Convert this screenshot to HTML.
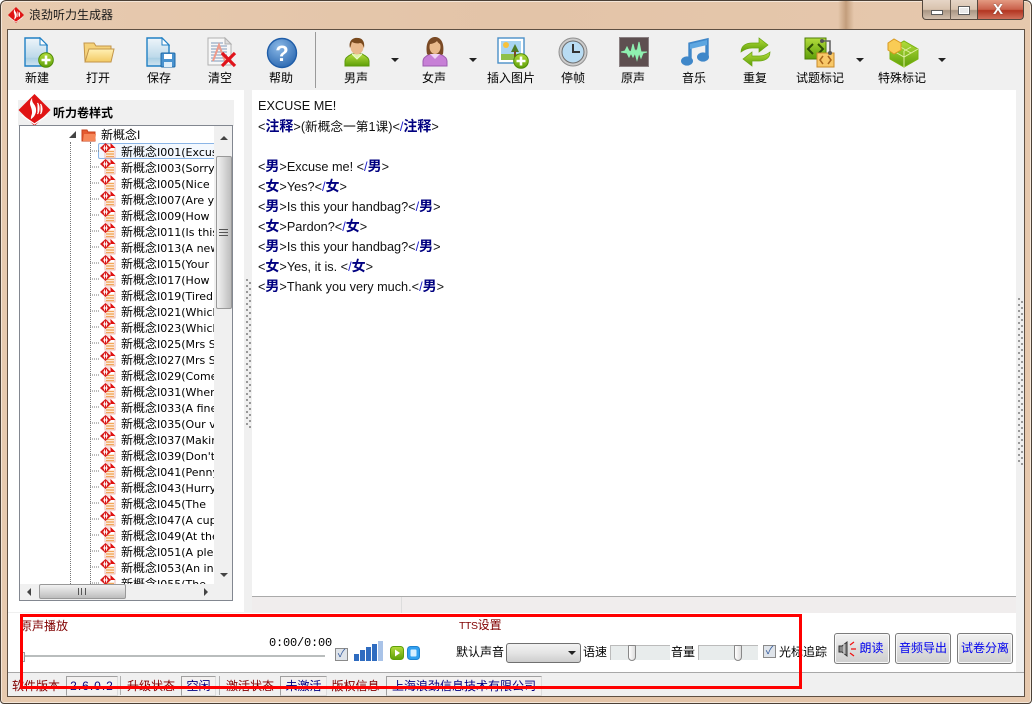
<!DOCTYPE html>
<html><head><meta charset="utf-8">
<style>
html,body{margin:0;padding:0;width:1032px;height:704px;overflow:hidden;background:#fff}
*{box-sizing:border-box}
body{font-family:"Liberation Sans","WenQuanYi Zen Hei","Noto Sans CJK SC",sans-serif;font-size:12px;color:#000;position:relative}
.a{position:absolute}
.t{position:absolute;white-space:nowrap;line-height:16px}
.c{transform:translateX(-50%)}
.i{position:absolute}
.dd{position:absolute;width:0;height:0;border-left:4px solid transparent;border-right:4px solid transparent;border-top:4px solid #222}
.row{position:absolute;left:0;height:16px;line-height:16px;white-space:nowrap;padding-left:101px;font-family:"DejaVu Sans","WenQuanYi Zen Hei",sans-serif;font-size:11px}
.row u{text-decoration:none;font-size:12px;font-family:"Liberation Sans","WenQuanYi Zen Hei","Noto Sans CJK SC",sans-serif}
.ed{position:absolute;left:258px;height:20px;line-height:20px;white-space:nowrap;font-size:12.7px;color:#111}
.ed b{color:#000080;font-size:14px}
.ed i{font-style:normal;color:#22c}
.sb{position:absolute;top:676px;height:20px;line-height:20px;white-space:nowrap;color:#800000;font-size:12px;text-align:center}
.sv{position:absolute;top:676px;height:20px;line-height:18px;white-space:nowrap;color:#000080;font-size:12px;text-align:center;border:1px solid #a0a0a0;border-right-color:#ddd;border-bottom-color:#ddd;background:#f3f1f0}
.btn{position:absolute;top:633px;height:31px;border:1px solid #7c7c7c;border-radius:3px;background:linear-gradient(#f2f2f2,#dedede 50%,#cfcfcf);box-shadow:inset 0 0 0 1px #f8f8f8;color:#0000ee;text-align:center;line-height:29px;white-space:nowrap;font-size:12px}
.dw{position:absolute;width:2px;background:repeating-linear-gradient(#999 0,#999 2px,transparent 2px,transparent 6px)}
</style></head><body>
<svg width="0" height="0" style="position:absolute">
<defs>
<linearGradient id="pg" x1="0" y1="0" x2="0" y2="1"><stop offset="0" stop-color="#eef5fa"/><stop offset=".7" stop-color="#bcd9ea"/><stop offset=".71" stop-color="#a9cfe3"/><stop offset="1" stop-color="#cfe3ef"/></linearGradient>
<linearGradient id="fg" x1="0" y1="0" x2="0" y2="1"><stop offset="0" stop-color="#fff0b5"/><stop offset="1" stop-color="#f3c963"/></linearGradient>
<radialGradient id="bg" cx=".4" cy=".3" r=".8"><stop offset="0" stop-color="#8ab8e6"/><stop offset="1" stop-color="#2563ad"/></radialGradient>
<linearGradient id="gn" x1="0" y1="0" x2="0" y2="1"><stop offset="0" stop-color="#b3dc3c"/><stop offset="1" stop-color="#5e9f08"/></linearGradient>
<symbol id="plus" viewBox="0 0 16 16"><circle cx="8" cy="8" r="7.3" fill="url(#gn)" stroke="#4d8a05"/><path d="M8 3.5v9M3.5 8h9" stroke="#fff" stroke-width="2.6"/></symbol>
<symbol id="page" viewBox="0 0 24 30"><path d="M1 1h15l7 7v21H1z" fill="url(#pg)" stroke="#2180c4" stroke-width="1.4"/><path d="M16 1v7h7z" fill="#fff" stroke="#2180c4"/></symbol>
<symbol id="doc" viewBox="0 0 16 16"><path d="M5 1h6l4 4v10H5z" fill="#fff" stroke="#eaa9a0" stroke-width=".8"/><path d="M10.500 0l5 5h-5z" fill="#e01010"/><path d="M6 8.500h8M6 11h8M6 13.500h8" stroke="#f2a65a" stroke-width="1.400"/><path d="M5.500 0L11 5 5.500 10 0 5z" fill="#d81c1c"/><path d="M4.500 2.500v5M6.500 2.500v5M3 5h5" stroke="#fff" stroke-width=".9"/></symbol>
<symbol id="logo" viewBox="0 0 32 32"><path d="M16 0L32 16 16 32 0 16z" fill="#e01414"/><path d="M3 21l13 9 13-9" fill="none" stroke="#fff" stroke-width="1.3"/><path d="M13 6c-3 5 2 7 1 14-1 3-1 4-1 4 4-3 5-8 3-12-1-2-3-3-3-6zM19 9c2 3 2 8 0 11M22 10c2 3 2 7 0 10" fill="#fff" stroke="#fff" stroke-width="1.2"/></symbol>
<symbol id="man" viewBox="0 0 26 30"><path d="M1 29v-5c0-4 5-6 7-7h10c2 1 7 3 7 7v5z" fill="url(#gn)" stroke="#5b9a0a"/><path d="M8 17l5 5 5-5" fill="#dff3a8" stroke="#eef8cf"/><ellipse cx="13" cy="10" rx="6.500" ry="7.500" fill="#e9b98c"/><path d="M6 11C4 3 10 0 14 1c5 0 7 5 6 10-1-3-2-5-4-5-3 1-6 0-8-1-1 2-1 4-2 6z" fill="#7a4a1e"/></symbol>
<symbol id="woman" viewBox="0 0 26 30"><path d="M1 29v-5c0-4 5-6 7-7h10c2 1 7 3 7 7v5z" fill="#c77fd6" stroke="#9d5bb0"/><path d="M8 17l5 5 5-5" fill="#efd3f5"/><path d="M5 17C3 5 8 0 13 0s10 5 8 17c-1 1-2 1-3 0H8c-1 1-2 1-3 0z" fill="#7a4a25"/><ellipse cx="13" cy="10" rx="5.500" ry="7" fill="#e9b98c"/><path d="M7 7c3 0 6-1 8-3 1 2 3 3 4 4l-1-5H9z" fill="#7a4a25"/></symbol>
</defs></svg>

<!-- window frame -->
<div class="a" style="left:0;top:0;width:1032px;height:704px;background:linear-gradient(90deg,#e7caaf,#e3c4a8 50%,#e6c8ad);border:1px solid #4b4036;border-radius:6px 6px 4px 4px;box-shadow:inset 0 0 0 1px #f4e6d8"></div>
<div class="a" style="left:838px;top:1px;width:16px;height:28px;background:linear-gradient(90deg,transparent,#c39e7c,transparent)"></div>
<div class="a" style="left:7px;top:29px;width:1018px;height:668px;background:#f0f0f0;border:1px solid #5f5043"></div>

<!-- title -->
<svg class="i" style="left:8px;top:7px" width="16" height="16"><use href="#logo" width="16" height="16"/></svg>
<div class="t" style="left:29px;top:7px;font-size:12px;color:#1a1a1a">浪劲听力生成器</div>
<!-- window controls -->
<div class="a" style="left:922px;top:0;width:56px;height:20px;border:1px solid #54483e;border-top:0;border-radius:0 0 0 4px;background:linear-gradient(#e6d5c6,#d8c2ad 50%,#a99684 55%,#d2bfad)"></div>
<div class="a" style="left:950px;top:0;width:1px;height:20px;background:#6c5e52"></div>
<div class="a" style="left:978px;top:0;width:46px;height:20px;border:1px solid #54483e;border-top:0;border-left:0;border-radius:0 0 4px 0;background:linear-gradient(#e39a82,#c9604a 50%,#b23420 55%,#d0705a)"></div>
<div class="a" style="left:931px;top:10px;width:12px;height:5px;background:#fff;border:1px solid #5c5c5c"></div>
<div class="a" style="left:958px;top:6px;width:12px;height:9px;background:#e9e9e9;border:1px solid #5c5c5c;box-shadow:inset 0 0 0 1px #fff"></div>
<div class="t" style="left:993px;top:2px;color:#fff;font-weight:bold;font-size:15px;text-shadow:0 0 1px #444">X</div>

<!-- workspace whites -->
<div class="a" style="left:8px;top:90px;width:236px;height:522px;background:#fff"></div>
<div class="a" style="left:252px;top:90px;width:764px;height:506px;background:#fff"></div>
<div class="a" style="left:252px;top:596px;width:764px;height:17px;background:#f0eded;border-top:1px solid #aaa"></div>
<div class="a" style="left:401px;top:597px;width:1px;height:16px;background:#ddd"></div>
<div class="a" style="left:8px;top:613px;width:1008px;height:59px;background:#fff"></div>
<div class="a" style="left:1016px;top:90px;width:8px;height:582px;background:#f0f0f0"></div>
<div class="a" style="left:8px;top:672px;width:1016px;height:1px;background:#a8a8a8"></div>
<div class="a" style="left:8px;top:673px;width:1016px;height:23px;background:#f0f0f0"></div>
<div class="dw" style="left:246px;top:279px;height:150px"></div>
<div class="dw" style="left:249px;top:282px;height:147px"></div>
<div class="dw" style="left:1018px;top:298px;height:168px"></div>
<div class="dw" style="left:1021px;top:301px;height:165px"></div>

<!-- toolbar -->
<div class="a" style="left:315px;top:32px;width:1px;height:56px;background:#9a9a9a"></div>
<svg class="i" style="left:24px;top:37px" width="30" height="31"><use href="#page" width="24" height="30"/><use href="#plus" x="14" y="15" width="16" height="16"/></svg>
<svg class="i" style="left:83px;top:40px" width="32" height="24"><path d="M2 21L1 3h10l2 3h15v15z" fill="#f5d27a" stroke="#c2954a"/><path d="M2 22L6 9h25l-3 13z" fill="url(#fg)" stroke="#c2954a"/></svg>
<svg class="i" style="left:146px;top:37px" width="30" height="31"><use href="#page" width="24" height="30"/><rect x="15" y="16" width="14" height="14" rx="1" fill="#4a93cf" stroke="#1f6aa8"/><rect x="18" y="17" width="8" height="5" fill="#fff"/><rect x="18" y="25" width="8" height="5" fill="#dfeef9"/></svg>
<svg class="i" style="left:207px;top:37px" width="30" height="31"><path d="M1 1h17l6 6v21H1z" fill="#f7f7f7" stroke="#b0b0b0"/><path d="M18 1v6h6z" fill="#ddd" stroke="#b0b0b0"/><path d="M4 6h12M4 9h16M4 12h16M4 15h16M4 18h16M4 21h16M4 24h16" stroke="#7f99b8"/><path d="M6 24l6-16 6 16" fill="none" stroke="#f09a8a" stroke-width="2"/><path d="M15 16l13 13M28 16L15 29" stroke="#e0141c" stroke-width="3.2"/></svg>
<svg class="i" style="left:266px;top:37px" width="32" height="32"><circle cx="16" cy="16" r="14.500" fill="url(#bg)" stroke="#1f5da8" stroke-width="1.4"/><text x="16" y="24" text-anchor="middle" font-family="Liberation Sans" font-weight="bold" font-size="22" fill="#fff">?</text></svg>
<svg class="i" style="left:344px;top:37px" width="26" height="30"><use href="#man" width="26" height="30"/></svg>
<svg class="i" style="left:422px;top:37px" width="26" height="30"><use href="#woman" width="26" height="30"/></svg>
<svg class="i" style="left:497px;top:37px" width="32" height="32"><rect x="1" y="1" width="26" height="25" fill="#fff" stroke="#4a90c8" stroke-width="1.400"/><rect x="4" y="4" width="20" height="13" fill="#a8d4f2"/><rect x="4" y="17" width="20" height="6" fill="#8fc04a"/><circle cx="9" cy="8" r="3" fill="#f7c23a"/><path d="M18 7l-4 8h8z" fill="#4d7a24"/><rect x="17" y="14" width="2" height="6" fill="#7a4a25"/><use href="#plus" x="16" y="16" width="16" height="16"/></svg>
<svg class="i" style="left:558px;top:37px" width="30" height="30"><circle cx="15" cy="15" r="14" fill="#ccc" stroke="#909090"/><circle cx="15" cy="15" r="11" fill="#b9dcf3" stroke="#6d6d6d"/><path d="M15 7v8h7" fill="none" stroke="#333" stroke-width="2"/></svg>
<svg class="i" style="left:619px;top:37px" width="30" height="30"><rect x=".5" y=".5" width="29" height="29" fill="#5e4f50" stroke="#8a8082"/><path d="M2 15l4-1 2-4 2 4 2 1 2-8 2 8 1-2 1 2 2-10 2 10 2 0 4 0 -4 1-2 5-2-5-2 7-2-7-2 4-2-4-2 4-2-4z" fill="#8ff0b0" stroke="#8ff0b0"/></svg>
<svg class="i" style="left:681px;top:37px" width="28" height="30"><path d="M9 24V7l17-4v17" fill="none" stroke="#3f87c9" stroke-width="3.400"/><path d="M9 7l17-4v5L9 12z" fill="#5da6e0"/><ellipse cx="6" cy="24" rx="6" ry="4.600" fill="#3f87c9"/><ellipse cx="22" cy="20" rx="6" ry="4.600" fill="#3f87c9"/></svg>
<svg class="i" style="left:740px;top:37px" width="31" height="30"><path d="M1 15C1 8 7 6 12 6h7V1l9 7-9 7v-4h-7c-4 0-7 1-11 4z" fill="url(#gn)" stroke="#6aa510" stroke-width=".7"/><path d="M30 15c0 7-6 9-11 9h-7v5l-9-7 9-7v4h7c4 0 7-1 11-4z" fill="url(#gn)" stroke="#6aa510" stroke-width=".7"/></svg>
<svg class="i" style="left:804px;top:37px" width="32" height="31"><rect x="1" y="1" width="21" height="21" fill="url(#gn)" stroke="#4e7d08"/><path d="M9 7l-5 5 5 5M14 7l5 5-5 5" fill="none" stroke="#2e4e05" stroke-width="2"/><path d="M18 4h8v12" fill="none" stroke="#666" stroke-width="1.600"/><rect x="13" y="16" width="17" height="14" fill="#f8c868" stroke="#c98a2a"/><path d="M19 19l-3 4 3 4M24 19l3 4-3 4" fill="none" stroke="#a8641a" stroke-width="1.500"/><circle cx="18" cy="4" r="2" fill="#555"/><circle cx="26" cy="16" r="2" fill="#555"/></svg>
<svg class="i" style="left:887px;top:37px" width="32" height="31"><path d="M3 12l14-8 14 8v10L17 30 3 22z" fill="url(#gn)" stroke="#79b30f"/><path d="M17 14v16M3 12l14 8 14-8M10 8l14 8M17 14l7-4" fill="none" stroke="#dff0a0"/><path d="M1 6l6-4 7 4v7l-7 4-6-4z" fill="#f9cc55" stroke="#d89a20"/></svg>
<div class="t c" style="left:37px;top:70px">新建</div>
<div class="t c" style="left:98px;top:70px">打开</div>
<div class="t c" style="left:159px;top:70px">保存</div>
<div class="t c" style="left:220px;top:70px">清空</div>
<div class="t c" style="left:281px;top:70px">帮助</div>
<div class="t c" style="left:356px;top:70px">男声</div>
<div class="t c" style="left:434px;top:70px">女声</div>
<div class="t c" style="left:511px;top:70px">插入图片</div>
<div class="t c" style="left:573px;top:70px">停帧</div>
<div class="t c" style="left:633px;top:70px">原声</div>
<div class="t c" style="left:694px;top:70px">音乐</div>
<div class="t c" style="left:755px;top:70px">重复</div>
<div class="t c" style="left:820px;top:70px">试题标记</div>
<div class="t c" style="left:902px;top:70px">特殊标记</div>
<div class="dd" style="left:391px;top:58px"></div>
<div class="dd" style="left:469px;top:58px"></div>
<div class="dd" style="left:856px;top:58px"></div>
<div class="dd" style="left:938px;top:58px"></div>

<!-- left panel -->
<div class="a" style="left:18px;top:100px;width:216px;height:26px;background:#f0f0f0"></div>
<svg class="i" style="left:18px;top:94px" width="33" height="32"><use href="#logo" width="33" height="32"/></svg>
<div class="t" style="left:53px;top:105px;font-weight:bold;font-size:12px">听力卷样式</div>
<div class="a" style="left:19px;top:125px;width:214px;height:476px;border:1px solid #828790;background:#fff"></div>
<div class="a" id="tree" style="left:20px;top:126px;width:194px;height:458px;overflow:hidden;background:#fff">
<div class="a" style="left:50px;top:16px;width:1px;height:442px;border-left:1px dotted #777"></div>
<div class="a" style="left:70px;top:16px;width:1px;height:442px;border-left:1px dotted #777"></div>
<div class="a" style="left:49px;top:5px;width:0;height:0;border-left:7px solid transparent;border-bottom:7px solid #444"></div>
<svg class="i" style="left:61px;top:2px" width="16" height="14"><path d="M1 13V2h5l1 2h7v9z" fill="#e45a30" stroke="#c6421c"/><path d="M2 13l1-7h12l-1 7z" fill="#f58658"/></svg>
<div class="t" style="left:81px;top:1px">新概念I</div>
<div class="a" style="left:78px;top:17px;width:136px;height:16px;border:1px solid #8bb5e6;border-radius:2px;background:#f3f8fe"></div>
<div class="row" style="top:18px"><u>新概念</u>I001(Excuse</div>
<div class="row" style="top:34px"><u>新概念</u>I003(Sorry</div>
<div class="row" style="top:50px"><u>新概念</u>I005(Nice</div>
<div class="row" style="top:66px"><u>新概念</u>I007(Are you</div>
<div class="row" style="top:82px"><u>新概念</u>I009(How</div>
<div class="row" style="top:98px"><u>新概念</u>I011(Is this</div>
<div class="row" style="top:114px"><u>新概念</u>I013(A new</div>
<div class="row" style="top:130px"><u>新概念</u>I015(Your</div>
<div class="row" style="top:146px"><u>新概念</u>I017(How</div>
<div class="row" style="top:162px"><u>新概念</u>I019(Tired</div>
<div class="row" style="top:178px"><u>新概念</u>I021(Which</div>
<div class="row" style="top:194px"><u>新概念</u>I023(Which</div>
<div class="row" style="top:210px"><u>新概念</u>I025(Mrs S</div>
<div class="row" style="top:226px"><u>新概念</u>I027(Mrs S</div>
<div class="row" style="top:242px"><u>新概念</u>I029(Come</div>
<div class="row" style="top:258px"><u>新概念</u>I031(Where</div>
<div class="row" style="top:274px"><u>新概念</u>I033(A fine</div>
<div class="row" style="top:290px"><u>新概念</u>I035(Our v</div>
<div class="row" style="top:306px"><u>新概念</u>I037(Making</div>
<div class="row" style="top:322px"><u>新概念</u>I039(Don't</div>
<div class="row" style="top:338px"><u>新概念</u>I041(Penny</div>
<div class="row" style="top:354px"><u>新概念</u>I043(Hurry</div>
<div class="row" style="top:370px"><u>新概念</u>I045(The</div>
<div class="row" style="top:386px"><u>新概念</u>I047(A cup</div>
<div class="row" style="top:402px"><u>新概念</u>I049(At the</div>
<div class="row" style="top:418px"><u>新概念</u>I051(A ple</div>
<div class="row" style="top:434px"><u>新概念</u>I053(An in</div>
<div class="row" style="top:450px"><u>新概念</u>I055(The</div>
<svg class="i" style="left:70px;top:17px" width="30" height="448">
<g id="dl" stroke="#777" stroke-dasharray="1 1"><path d="M0 8h10M0 24h10M0 40h10M0 56h10M0 72h10M0 88h10M0 104h10M0 120h10M0 136h10M0 152h10M0 168h10M0 184h10M0 200h10M0 216h10M0 232h10M0 248h10M0 264h10M0 280h10M0 296h10M0 312h10M0 328h10M0 344h10M0 360h10M0 376h10M0 392h10M0 408h10M0 424h10M0 440h10"/></g>
<use href="#doc" x="10" y="0" width="16" height="16"/><use href="#doc" x="10" y="16" width="16" height="16"/><use href="#doc" x="10" y="32" width="16" height="16"/><use href="#doc" x="10" y="48" width="16" height="16"/><use href="#doc" x="10" y="64" width="16" height="16"/><use href="#doc" x="10" y="80" width="16" height="16"/><use href="#doc" x="10" y="96" width="16" height="16"/><use href="#doc" x="10" y="112" width="16" height="16"/><use href="#doc" x="10" y="128" width="16" height="16"/><use href="#doc" x="10" y="144" width="16" height="16"/><use href="#doc" x="10" y="160" width="16" height="16"/><use href="#doc" x="10" y="176" width="16" height="16"/><use href="#doc" x="10" y="192" width="16" height="16"/><use href="#doc" x="10" y="208" width="16" height="16"/><use href="#doc" x="10" y="224" width="16" height="16"/><use href="#doc" x="10" y="240" width="16" height="16"/><use href="#doc" x="10" y="256" width="16" height="16"/><use href="#doc" x="10" y="272" width="16" height="16"/><use href="#doc" x="10" y="288" width="16" height="16"/><use href="#doc" x="10" y="304" width="16" height="16"/><use href="#doc" x="10" y="320" width="16" height="16"/><use href="#doc" x="10" y="336" width="16" height="16"/><use href="#doc" x="10" y="352" width="16" height="16"/><use href="#doc" x="10" y="368" width="16" height="16"/><use href="#doc" x="10" y="384" width="16" height="16"/><use href="#doc" x="10" y="400" width="16" height="16"/><use href="#doc" x="10" y="416" width="16" height="16"/><use href="#doc" x="10" y="432" width="16" height="16"/>
</svg>
</div>
<!-- v scrollbar -->
<div class="a" style="left:214px;top:126px;width:18px;height:458px;background:#f0f0f0"></div>
<div class="a" style="left:220px;top:136px;border-left:4px solid transparent;border-right:4px solid transparent;border-bottom:4px solid #444"></div>
<div class="a" style="left:220px;top:573px;border-left:4px solid transparent;border-right:4px solid transparent;border-top:4px solid #444"></div>
<div class="a" style="left:216px;top:156px;width:16px;height:153px;background:linear-gradient(90deg,#f2f2f2,#d8d8d8 50%,#bdbdbd);border:1px solid #999;border-radius:2px"></div>
<div class="a" style="left:219px;top:229px;width:9px;height:7px;border-top:1px solid #555;border-bottom:1px solid #555"><div style="height:1px;margin-top:2px;background:#555"></div></div>
<!-- h scrollbar -->
<div class="a" style="left:20px;top:584px;width:212px;height:16px;background:#f0f0f0"></div>
<div class="a" style="left:27px;top:588px;border-top:4px solid transparent;border-bottom:4px solid transparent;border-right:4px solid #444"></div>
<div class="a" style="left:204px;top:588px;border-top:4px solid transparent;border-bottom:4px solid transparent;border-left:4px solid #444"></div>
<div class="a" style="left:39px;top:584px;width:87px;height:15px;background:linear-gradient(#f2f2f2,#d8d8d8 50%,#bdbdbd);border:1px solid #999;border-radius:2px"></div>
<div class="a" style="left:78px;top:588px;width:8px;height:7px;border-left:1px solid #555;border-right:1px solid #555"><div style="width:1px;height:7px;margin-left:2px;background:#555"></div></div>

<!-- editor -->
<div class="ed" style="top:96px">EXCUSE ME!</div>
<div class="ed" style="top:116px">&lt;<b>注释</b>&gt;(新概念一第1课)&lt;<i>/</i><b>注释</b>&gt;</div>
<div class="ed" style="top:156px">&lt;<b>男</b>&gt;Excuse me! &lt;<i>/</i><b>男</b>&gt;</div>
<div class="ed" style="top:176px">&lt;<b>女</b>&gt;Yes?&lt;<i>/</i><b>女</b>&gt;</div>
<div class="ed" style="top:196px">&lt;<b>男</b>&gt;Is this your handbag?&lt;<i>/</i><b>男</b>&gt;</div>
<div class="ed" style="top:216px">&lt;<b>女</b>&gt;Pardon?&lt;<i>/</i><b>女</b>&gt;</div>
<div class="ed" style="top:236px">&lt;<b>男</b>&gt;Is this your handbag?&lt;<i>/</i><b>男</b>&gt;</div>
<div class="ed" style="top:256px">&lt;<b>女</b>&gt;Yes, it is. &lt;<i>/</i><b>女</b>&gt;</div>
<div class="ed" style="top:276px">&lt;<b>男</b>&gt;Thank you very much.&lt;<i>/</i><b>男</b>&gt;</div>

<!-- bottom panel -->
<div class="t" style="left:20px;top:618px;color:#800000">原声播放</div>
<div class="t" style="left:269px;top:635px;font-family:'Liberation Mono',monospace;font-size:12px;letter-spacing:-.2px">0:00/0:00</div>
<div class="a" style="left:22px;top:655px;width:303px;height:2px;background:#b9bdbd"></div>
<div class="a" style="left:21px;top:652px;width:4px;height:10px;background:#eee;border:1px solid #999"></div>
<div class="a" style="left:335px;top:648px;width:13px;height:13px;border:1px solid #8a8a8a;background:#dfe4ea;color:#3a5fa0;font-size:11px;line-height:11px;text-align:center">✓</div>
<div class="a" style="left:354px;top:654px;width:5px;height:7px;background:#2f6cc0"></div>
<div class="a" style="left:360px;top:650px;width:5px;height:11px;background:#2f6cc0"></div>
<div class="a" style="left:366px;top:647px;width:5px;height:14px;background:#2f6cc0"></div>
<div class="a" style="left:372px;top:644px;width:5px;height:17px;background:#2f6cc0"></div>
<div class="a" style="left:378px;top:641px;width:5px;height:20px;background:#a9c3e8"></div>
<svg class="i" style="left:390px;top:646px" width="30" height="15"><rect x=".5" y=".5" width="13" height="13" rx="3" fill="url(#gn)" stroke="#5e9f08"/><path d="M5 3.500l5 3.500-5 3.500z" fill="#fff"/><rect x="17.500" y=".5" width="12" height="13" rx="3" fill="#31a0f0" stroke="#1f83d0"/><rect x="20.500" y="3.500" width="6" height="7" rx="1" fill="#d8efff"/></svg>

<div class="t" style="left:459px;top:617px;color:#800000"><span style="font-size:10.500px;letter-spacing:-.4px">TTS</span>设置</div>
<div class="t" style="left:456px;top:644px">默认声音</div>
<div class="a" style="left:506px;top:643px;width:75px;height:20px;border:1px solid #707070;border-radius:3px;background:linear-gradient(#f2f2f2,#e4e4e4 50%,#cdcdcd)"></div>
<div class="dd" style="left:568px;top:651px"></div>
<div class="t" style="left:583px;top:644px">语速</div>
<div class="a" style="left:610px;top:645px;width:60px;height:15px;background:#e8ecec;border-left:1px solid #bbb;border-top:1px solid #bbb"></div>
<div class="a" style="left:628px;top:645px;width:8px;height:16px;background:linear-gradient(90deg,#fff,#ddd);border:1px solid #888;border-radius:1px 1px 4px 4px"></div>
<div class="t" style="left:671px;top:644px">音量</div>
<div class="a" style="left:698px;top:645px;width:60px;height:15px;background:#e8ecec;border-left:1px solid #bbb;border-top:1px solid #bbb"></div>
<div class="a" style="left:734px;top:645px;width:8px;height:16px;background:linear-gradient(90deg,#fff,#ddd);border:1px solid #888;border-radius:1px 1px 4px 4px"></div>
<div class="a" style="left:763px;top:645px;width:13px;height:13px;border:1px solid #8a8a8a;background:#dfe4ea;color:#3a5fa0;font-size:11px;line-height:11px;text-align:center">✓</div>
<div class="t" style="left:779px;top:644px">光标追踪</div>

<div class="btn" style="left:834px;width:56px;padding-left:19px">朗读</div>
<svg class="i" style="left:838px;top:640px" width="20" height="18"><path d="M1 6h3l5-4v14l-5-4H1z" fill="#888" stroke="#333"/><path d="M6 4v10" stroke="#eee"/><path d="M12 5l4-3M13 9h5M12 13l4 3" stroke="#f01010" stroke-width="1.200"/></svg>
<div class="btn" style="left:895px;width:56px">音频导出</div>
<div class="btn" style="left:957px;width:56px">试卷分离</div>

<!-- status bar -->
<div class="sb" style="left:12px;width:48px">软件版本</div>
<div class="sv" style="left:66px;width:52px;letter-spacing:1px">2.6.0.2</div>
<div class="a" style="left:120px;top:676px;width:1px;height:19px;background:#b0b0b0"></div>
<div class="sb" style="left:127px;width:48px">升级状态</div>
<div class="sv" style="left:181px;width:35px">空闲</div>
<div class="a" style="left:219px;top:676px;width:1px;height:19px;background:#b0b0b0"></div>
<div class="sb" style="left:226px;width:48px">激活状态</div>
<div class="sv" style="left:280px;width:47px">未激活</div>
<div class="sb" style="left:331px;width:49px">版权信息</div>
<div class="sv" style="left:386px;width:156px">上海浪劲信息技术有限公司</div>

<!-- red annotation -->
<div class="a" style="left:20px;top:614px;width:782px;height:75px;border:3px solid #f00"></div>
</body></html>
